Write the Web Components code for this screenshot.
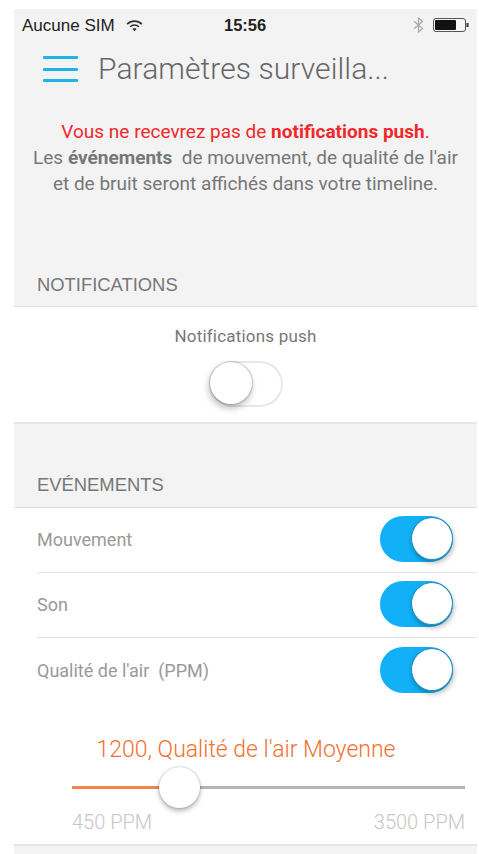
<!DOCTYPE html>
<html lang="fr"><head><meta charset="utf-8"><style>
html,body{margin:0;padding:0;background:#fff}
body{width:479px;height:854px;overflow:hidden;font-family:Roboto,sans-serif}
</style></head><body>
<settings-screen></settings-screen>
<script>
class Base extends HTMLElement{
  constructor(){super();this.attachShadow({mode:'open'}).innerHTML=this.constructor.html;}
}
class StatusBar extends Base{static html=`<style>
:host{display:flex;align-items:center;height:32px;padding:0 8px 0 8px;font:17px/1 "Liberation Sans",sans-serif;color:#222;position:relative}
.l{display:flex;align-items:center;gap:11px;width:202px}
.t{font-weight:700;font-size:16.500px;flex:1;color:#222}
.r{display:flex;align-items:center;gap:9px}
svg{display:block}
</style><div class="l"><span>Aucune SIM</span><svg width="17" height="13" viewBox="0 0 15 11"><path d="M1 4.200a9.400 9.400 0 0 1 13 0" fill="none" stroke="#333" stroke-width="1.500"/><path d="M3.600 6.600a5.700 5.700 0 0 1 7.800 0" fill="none" stroke="#333" stroke-width="1.500"/><path d="M7.500 10.500 5.600 8.500a2.800 2.800 0 0 1 3.800 0z" fill="#333"/></svg></div><span class="t">15:56</span>
<div class="r"><svg width="11" height="16" viewBox="0 0 11 16"><path d="M1 4.300 9.500 11.500 5.500 15V1L9.500 4.500 1 11.700" fill="none" stroke="#a9a9a9" stroke-width="1.200"/></svg>
<svg width="36" height="14" viewBox="0 0 36 14"><rect x=".5" y=".5" width="32" height="13" rx="2.500" fill="#f6f6f6" stroke="#555"/><rect x="2" y="2" width="21" height="10" rx="1" fill="#111"/><rect x="33.500" y="5" width="2" height="4" fill="#333"/></svg></div></div>`}
class NavBar extends Base{static html=`<style>
:host{display:flex;align-items:center;height:56px;padding:0 0 0 29px}
.b{display:flex;flex-direction:column;gap:8.500px;width:35px;margin-right:20px}
i{display:block;height:3px;background:#1eb4ea;border-radius:1px}
span{font:300 30px/1 Roboto,sans-serif;color:#666;letter-spacing:.08px}
</style><div class="b"><i></i><i></i><i></i></div><span><slot></slot></span>`}
class Notice extends Base{static html=`<style>
:host{display:block;padding:22px 0 0;height:148px;box-sizing:border-box;text-align:center;font:400 19px/26px Roboto,sans-serif;color:#777}
.red{color:#f0282a}b{font-weight:700}
</style><div><span class="red">Vous ne recevrez pas de <b>notifications push</b>.</span><br>Les <b>événements</b>&nbsp; de mouvement, de qualité de l'air<br>et de bruit seront affichés dans votre timeline.</div>`}
class SectionHead extends Base{static html=`<style>
:host{display:flex;align-items:flex-end;box-sizing:border-box;padding:0 0 11px 23px;font:400 18.400px/20px "Liberation Sans",sans-serif;color:#777}
</style><slot></slot>`}
class IosToggle extends Base{static html=`<style>
:host{display:block;width:73px;height:46px;box-sizing:border-box;border-radius:23px;position:relative;border:2px solid #e8e8e8;background:#fff}
:host([on]){background:#12b0f6;border-color:#12b0f6}
.k{position:absolute;box-sizing:border-box;left:-2px;top:-1px;width:42px;height:42px;border-radius:50%;background:#fff;box-shadow:0 0 1px 1px rgba(90,90,90,.3),-1px 4px 7px rgba(0,0,0,.28)}
:host([on]) .k{left:29px;top:-1px;width:42px;height:43px;border:1px solid #1c8cc0;box-shadow:1px 3px 5px rgba(0,0,0,.28)}
</style><div class="k"></div>`}
class ToggleRow extends Base{static html=`<style>
:host{display:flex;align-items:center;justify-content:space-between;height:65px;margin-left:23px;padding-right:24px;box-sizing:border-box;font:400 18px/20px Roboto,sans-serif;color:#999}
:host(.line){border-bottom:1px solid #e2e2e2}
ios-toggle{margin-top:-2px}
</style><span><slot></slot></span><ios-toggle on></ios-toggle>`}
class AirSlider extends Base{static html=`<style>
:host{display:block;padding:0 12px 0 58px}
.t{font:300 23px/26px Roboto,sans-serif;color:#f2702f;text-align:center;padding-right:45px}
.s{position:relative;height:49px;margin-top:-1px}
.s .g{position:absolute;left:0;right:0;top:24px;height:3px;background:#b5b5b5}
.s .o{position:absolute;left:0;width:90px;top:24px;height:3px;background:#f5854b}
.k{position:absolute;left:87px;top:5px;width:41px;height:41px;border-radius:50%;background:#fff;box-shadow:0 0 2px rgba(0,0,0,.3),0 3px 5px rgba(0,0,0,.28)}
.l{display:flex;justify-content:space-between;font:300 20px/22px Roboto,sans-serif;color:#c6c6c6}
</style><div class="t"><slot></slot></div><div class="s"><div class="g"></div><div class="o"></div><div class="k"></div></div><div class="l"><span>450 PPM</span><span>3500 PPM</span></div>`}
class SettingsScreen extends Base{static html=`<style>
:host{display:block;margin:9px 2px 0 14px;width:463px;height:845px;background:#f3f3f3}
.top{border-bottom:1px solid #dedede}
section-head{height:61px}
.push{background:#fff;height:117px;box-sizing:border-box;padding-top:19px;display:flex;flex-direction:column;align-items:center;gap:15px;border-bottom:2px solid #e6e6e6;font:400 17px/20px Roboto,sans-serif;color:#777;letter-spacing:.2px}
.push ios-toggle{margin-right:-1px}
.h2{height:84px;border-bottom:1px solid #dedede;box-sizing:border-box}
.h2 section-head{height:82px}
.ev{background:#fff;height:338px;border-bottom:2px solid #e6e6e6;box-sizing:border-box}
air-slider{margin-top:34px}
</style><status-bar></status-bar><nav-bar>Paramètres surveilla...</nav-bar><air-notice></air-notice>
<div class="top"><section-head>NOTIFICATIONS</section-head></div>
<div class="push"><span>Notifications push</span><ios-toggle></ios-toggle></div>
<div class="h2"><section-head>EVÉNEMENTS</section-head></div>
<div class="ev"><toggle-row class="line">Mouvement</toggle-row><toggle-row class="line">Son</toggle-row><toggle-row>Qualité de l'air&nbsp; (PPM)</toggle-row><air-slider>1200, Qualité de l'air Moyenne</air-slider></div>`}
customElements.define('status-bar',StatusBar);
customElements.define('nav-bar',NavBar);
customElements.define('air-notice',Notice);
customElements.define('section-head',SectionHead);
customElements.define('ios-toggle',IosToggle);
customElements.define('toggle-row',ToggleRow);
customElements.define('air-slider',AirSlider);
customElements.define('settings-screen',SettingsScreen);
</script></body></html>
